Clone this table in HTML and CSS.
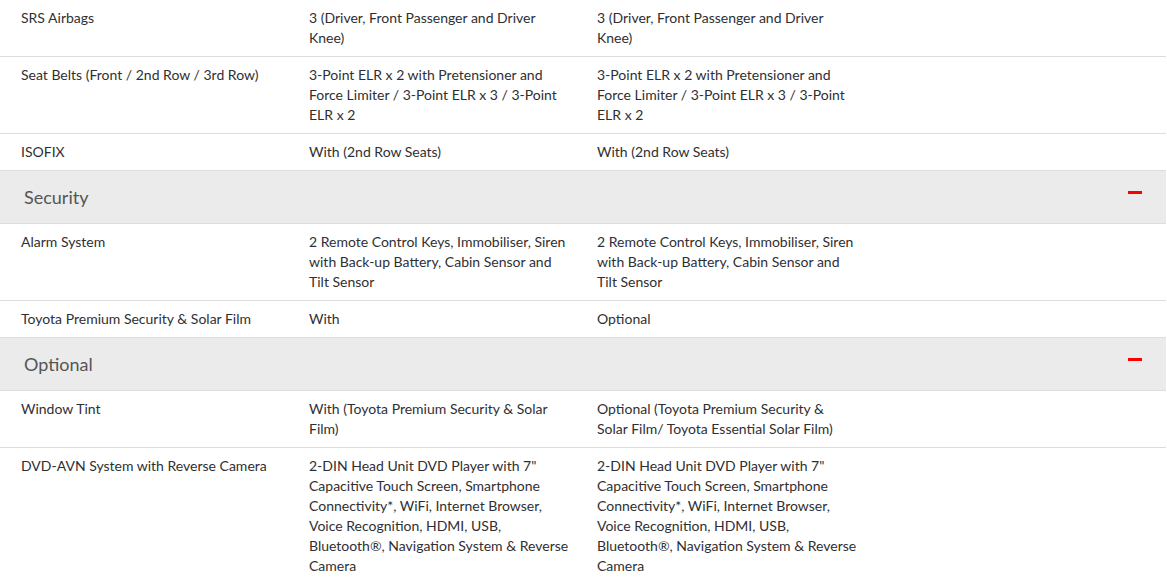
FILE: index.html
```html
<!DOCTYPE html>
<html>
<head>
<meta charset="utf-8">
<link rel="stylesheet" href="styles.css">
</head>
<body>
<div class="specs">
  <div class="row">
    <div class="cell label">SRS Airbags</div>
    <div class="cell">3 (Driver, Front Passenger and Driver Knee)</div>
    <div class="cell">3 (Driver, Front Passenger and Driver Knee)</div>
    <div class="cell"></div>
  </div>
  <div class="row">
    <div class="cell label">Seat Belts (Front / 2nd Row / 3rd Row)</div>
    <div class="cell">3-Point ELR x 2 with Pretensioner and Force Limiter / 3-Point ELR x 3 / 3-Point ELR x 2</div>
    <div class="cell">3-Point ELR x 2 with Pretensioner and Force Limiter / 3-Point ELR x 3 / 3-Point ELR x 2</div>
    <div class="cell"></div>
  </div>
  <div class="row">
    <div class="cell label">ISOFIX</div>
    <div class="cell">With (2nd Row Seats)</div>
    <div class="cell">With (2nd Row Seats)</div>
    <div class="cell"></div>
  </div>
  <div class="section">
    <span class="section-title">Security</span>
    <span class="minus"></span>
  </div>
  <div class="row">
    <div class="cell label">Alarm System</div>
    <div class="cell">2 Remote Control Keys, Immobiliser, Siren with Back-up Battery, Cabin Sensor and Tilt Sensor</div>
    <div class="cell">2 Remote Control Keys, Immobiliser, Siren with Back-up Battery, Cabin Sensor and Tilt Sensor</div>
    <div class="cell"></div>
  </div>
  <div class="row">
    <div class="cell label">Toyota Premium Security &amp; Solar Film</div>
    <div class="cell">With</div>
    <div class="cell">Optional</div>
    <div class="cell"></div>
  </div>
  <div class="section">
    <span class="section-title">Optional</span>
    <span class="minus"></span>
  </div>
  <div class="row">
    <div class="cell label">Window Tint</div>
    <div class="cell">With (Toyota Premium Security &amp; Solar Film)</div>
    <div class="cell">Optional (Toyota Premium Security &amp; Solar Film/ Toyota Essential Solar Film)</div>
    <div class="cell"></div>
  </div>
  <div class="row">
    <div class="cell label">DVD-AVN System with Reverse Camera</div>
    <div class="cell">2-DIN Head Unit DVD Player with 7" Capacitive Touch Screen, Smartphone Connectivity*, WiFi, Internet Browser, Voice Recognition, HDMI, USB, Bluetooth®, Navigation System &amp; Reverse Camera</div>
    <div class="cell">2-DIN Head Unit DVD Player with 7" Capacitive Touch Screen, Smartphone Connectivity*, WiFi, Internet Browser, Voice Recognition, HDMI, USB, Bluetooth®, Navigation System &amp; Reverse Camera</div>
    <div class="cell"></div>
  </div>
</div>
</body>
</html>
```

FILE: styles.css
```css
html, body {
  margin: 0;
  padding: 0;
  background: #ffffff;
}
body {
  font-family: "Lato", "Noto Sans", sans-serif;
  font-size: 14px;
  line-height: 20px;
  color: #2f2f33;
}
.specs {
  width: 1166px;
}
.row {
  display: grid;
  grid-template-columns: 288px 288px 288px 1fr;
  border-bottom: 1px solid #dddddd;
}
.cell {
  padding: 8px 7px 8px 21px;
}
.section {
  display: flex;
  align-items: center;
  justify-content: space-between;
  height: 52px;
  background: #ebebeb;
  border-bottom: 1px solid #dddddd;
  padding: 0 24px 0 24px;
}
.section-title {
  font-size: 18px;
  color: #555555;
  margin-top: -1px;
}
.minus {
  display: block;
  width: 14px;
  height: 3px;
  background: #ff0000;
  margin-top: -9px;
}
```
